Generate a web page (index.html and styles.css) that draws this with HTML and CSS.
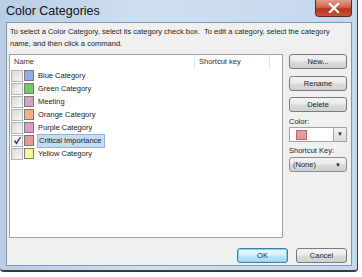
FILE: index.html
```html
<!DOCTYPE html>
<html lang="en">

<head>
    <meta charset="UTF-8">
    <title>Color Categories</title>
    <link rel="stylesheet" href="styles.css">
</head>

<body>
    <div class="window">
        <div class="titlebar">
            <span class="title">Color Categories</span>
            <button class="close">
                <svg width="12" height="10" viewBox="0 0 12 10">
                    <path d="M2 1 L10 9 M10 1 L2 9" stroke="#fff" stroke-width="2.4" stroke-linecap="square" />
                </svg>
            </button>
        </div>
        <div class="panel">
            <p class="intro">To select a Color Category, select its category check box.&nbsp; To edit a category, select the category name, and then click a command.</p>
            <div class="main">
                <div class="listbox">
                    <div class="list-head">
                        <span class="col-name">Name</span>
                        <span class="col-key">Shortcut key</span>
                        <span class="col-rest"></span>
                    </div>
                    <div class="row">
                        <span class="check"></span>
                        <span class="swatch blue"></span>
                        <span class="label">Blue Category</span>
                    </div>
                    <div class="row">
                        <span class="check"></span>
                        <span class="swatch green"></span>
                        <span class="label">Green Category</span>
                    </div>
                    <div class="row">
                        <span class="check"></span>
                        <span class="swatch pink"></span>
                        <span class="label">Meeting</span>
                    </div>
                    <div class="row">
                        <span class="check"></span>
                        <span class="swatch orange"></span>
                        <span class="label">Orange Category</span>
                    </div>
                    <div class="row">
                        <span class="check"></span>
                        <span class="swatch pink"></span>
                        <span class="label">Purple Category</span>
                    </div>
                    <div class="row">
                        <span class="check checked">
                            <svg width="9" height="9" viewBox="0 0 9 9">
                                <path d="M1.5 4.5 L3.5 7.5 L7.5 1" fill="none" stroke="#2a3a5c" stroke-width="1.4" />
                            </svg>
                        </span>
                        <span class="swatch red"></span>
                        <span class="label selected">Critical Importance</span>
                    </div>
                    <div class="row">
                        <span class="check"></span>
                        <span class="swatch yellow"></span>
                        <span class="label">Yellow Category</span>
                    </div>
                </div>
                <div class="side">
                    <button class="btn">New...</button>
                    <button class="btn">Rename</button>
                    <button class="btn">Delete</button>
                    <span class="field-label">Color:</span>
                    <div class="combo color-combo">
                        <span class="swatch red big"></span>
                        <span class="drop-btn">&#9660;</span>
                    </div>
                    <span class="field-label">Shortcut Key:</span>
                    <div class="combo key-combo">
                        <span class="combo-text">(None)</span>
                        <span class="drop-arrow">&#9660;</span>
                    </div>
                </div>
            </div>
            <div class="footer">
                <button class="btn ok">OK</button>
                <button class="btn">Cancel</button>
            </div>
        </div>
    </div>
</body>

</html>
```

FILE: styles.css
```css
body {
    margin: 0;
    background-color: #fff;
    font-family: "Liberation Sans", Arial, sans-serif;
    font-size: 7.5px;
    color: #1e1e1e;
}

* {
    box-sizing: border-box;
}

.window {
    width: 358px;
    height: 272px;
    padding: 0 5px 0 6px;
    display: flex;
    flex-direction: column;
    background: linear-gradient(90deg, #b7cde6, #cfe0f2 40%, #c3d7ee);
    border-right: 1px solid #3a3a3a;
    border-bottom: 2px solid #3a3a3a;
    border-radius: 0 0 4px 4px;
}

.titlebar {
    height: 22px;
    flex: none;
    display: flex;
    align-items: flex-start;
}

.title {
    font-family: "Liberation Sans", Arial, sans-serif;
    font-size: 12.5px;
    line-height: 13px;
    margin-top: 5px;
    color: #111;
}

.close {
    margin-left: auto;
    width: 37px;
    height: 17px;
    padding: 0;
    border: 1px solid #6b2418;
    border-top: none;
    border-radius: 0 0 4px 4px;
    background: linear-gradient(#e39c8c, #d06650 45%, #b8341e 55%, #c9533a);
    display: flex;
    justify-content: center;
    align-items: center;
}

.panel {
    height: 244px;
    flex: none;
    background-color: #f0f0f0;
    border: 1px solid #8595aa;
    padding: 3px 4px 0 2px;
    display: flex;
    flex-direction: column;
}

.intro {
    margin: 0 0 4px 1px;
    line-height: 12px;
    width: 340px;
}

.main {
    display: flex;
    gap: 6px;
}

.listbox {
    width: 274px;
    height: 184px;
    background-color: #fff;
    border: 1px solid #a0a0a0;
}

.list-head {
    height: 14px;
    display: flex;
    line-height: 14px;
    color: #333;
}

.col-name {
    width: 185px;
    padding-left: 4px;
    border-right: 1px solid #e2e2e2;
}

.col-key {
    width: 75px;
    padding-left: 4px;
    border-right: 1px solid #e2e2e2;
}

.col-rest {
    flex: 1;
}

.row {
    height: 13px;
    display: flex;
    align-items: center;
}

.check {
    width: 12px;
    height: 12px;
    margin-left: 1px;
    border: 1px solid #b5b5b5;
    background: linear-gradient(135deg, #d8d8d8, #f8f8f8);
    display: flex;
    align-items: center;
    justify-content: center;
}

.check.checked {
    background: #f4f4f4;
}

.swatch {
    width: 10px;
    height: 11px;
    margin-left: 1px;
    border: 1px solid #7a7a7a;
}

.blue {
    background-color: #8eaee6;
}

.green {
    background-color: #6cd05e;
}

.pink {
    background-color: #d9a0c4;
}

.orange {
    background-color: #f7b07a;
}

.red {
    background-color: #e8989a;
}

.yellow {
    background-color: #fbf58c;
}

.label {
    margin-left: 3px;
    padding: 0 1px;
    line-height: 12px;
    color: #222;
}

.label.selected {
    background-color: #c6dcf3;
    border: 1px solid #8db2e3;
    line-height: 12px;
    padding: 0 2px 0 1px;
}

.side {
    width: 58px;
    display: flex;
    flex-direction: column;
}

.btn {
    font-family: "Liberation Sans", Arial, sans-serif;
    font-size: 7.5px;
    color: #1e1e1e;
    width: 58px;
    height: 15px;
    padding: 0;
    border: 1px solid #7a7a7a;
    border-radius: 3px;
    background: linear-gradient(#f4f4f4, #eaeaea 48%, #dadada 52%, #d0d0d0);
}

.side .btn {
    margin-bottom: 6px;
}

.side .btn:first-child {
    margin-bottom: 7px;
}

.side .btn:nth-child(3) {
    margin-bottom: 4px;
}

.field-label {
    line-height: 11px;
}

.combo {
    display: flex;
    align-items: center;
}

.color-combo {
    height: 15px;
    margin-bottom: 3px;
    background-color: #fff;
    border: 1px solid #a4a4a4;
}

.color-combo .swatch.big {
    width: 11px;
    height: 10px;
    margin-left: 6px;
    border-color: #c06a70;
}

.drop-btn {
    margin-left: auto;
    width: 13px;
    height: 13px;
    border-left: 1px solid #a4a4a4;
    background: linear-gradient(#f2f2f2, #dcdcdc);
    font-size: 6px;
    line-height: 13px;
    text-align: center;
}

.key-combo {
    height: 15px;
    margin-top: 1px;
    border: 1px solid #8c8c8c;
    border-radius: 3px;
    background: linear-gradient(#f4f4f4, #eaeaea 48%, #dadada 52%, #d0d0d0);
}

.combo-text {
    padding-left: 3px;
}

.drop-arrow {
    margin-left: auto;
    margin-right: 5px;
    font-size: 6px;
}

.footer {
    display: flex;
    justify-content: flex-end;
    gap: 8px;
    margin-top: 10px;
}

.footer .btn {
    width: 51px;
}

.btn.ok {
    border-color: #3c7fb1;
    box-shadow: inset 0 0 0 1px #8ad3f5;
    background: linear-gradient(#eaf6fd, #d9f0fc 48%, #bee6fd 52%, #a7d9f5);
}
```
